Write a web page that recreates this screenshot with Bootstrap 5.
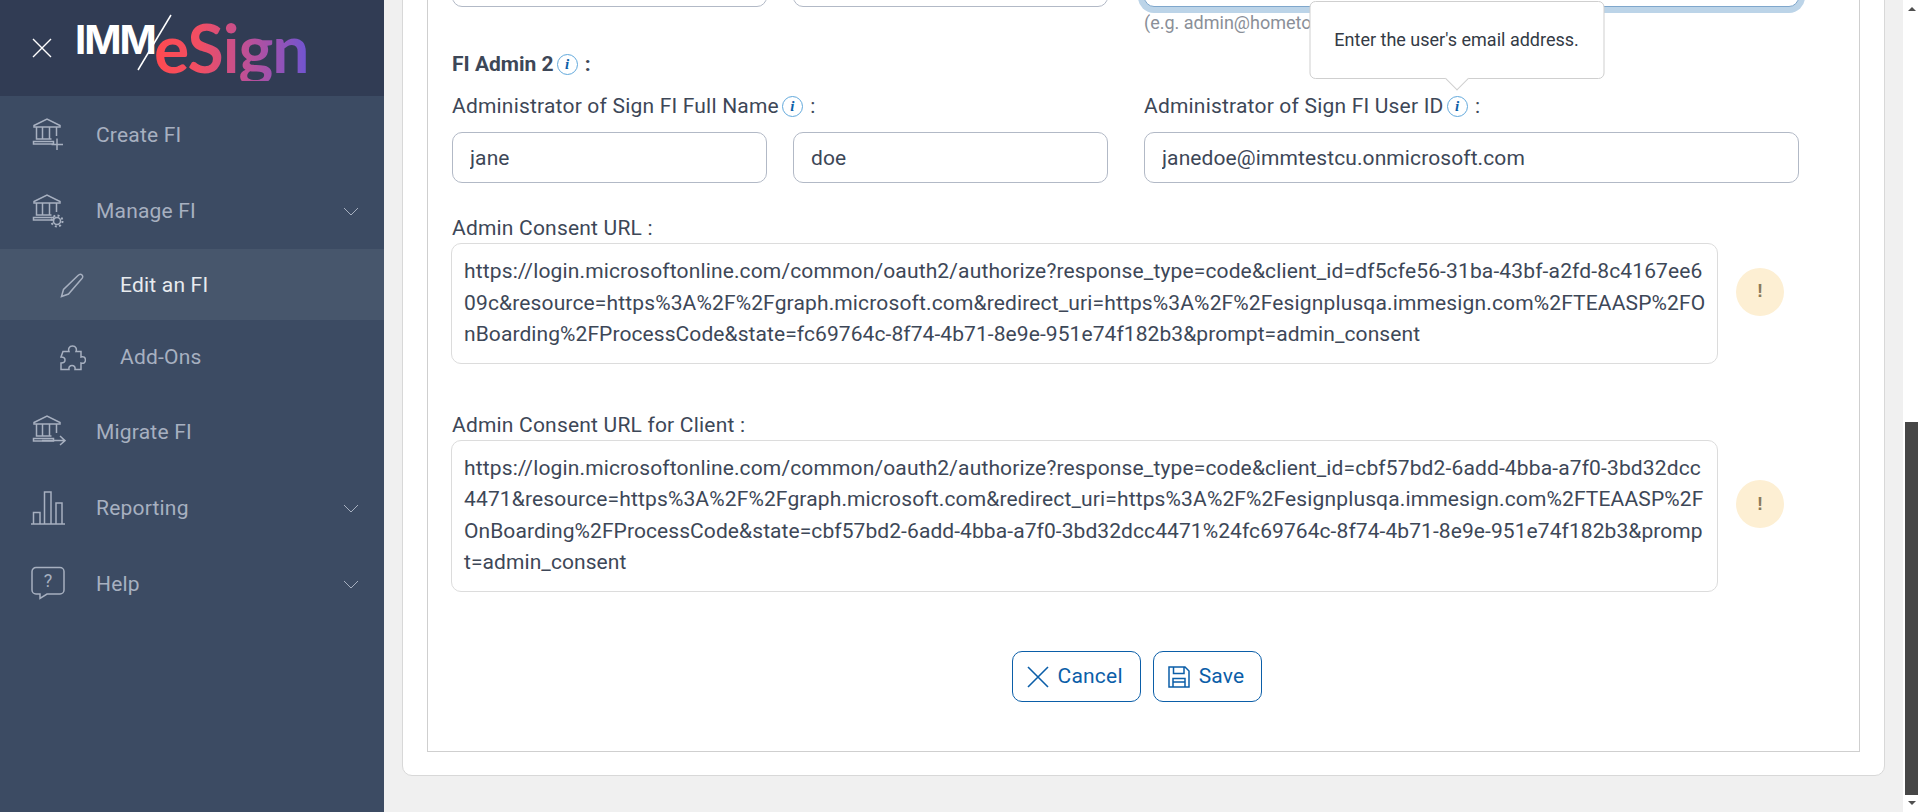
<!DOCTYPE html>
<html lang="en">
<head>
    <meta charset="UTF-8">
    <meta name="viewport" content="width=device-width, initial-scale=1.0">
    <title>Edit an FI</title>
    <link href="https://cdn.jsdelivr.net/npm/bootstrap@5.3.0/dist/css/bootstrap.min.css" rel="stylesheet">
    <style>
        html, body { height: 100%; overflow: hidden; }
        body {
            background: #f0f0f0;
            color: #3d4757;
            font-family: Roboto, "Liberation Sans", sans-serif;
            font-size: 21px;
            letter-spacing: .2px;
        }
        .app-shell { height: 812px; }

        /* sidebar */
        .side-nav { width: 384px; background: #3c4b63; flex: none; }
        .side-head { height: 96px; background: #313c54; padding-left: 32px; }
        .close-x { width: 20px; height: 20px; margin-right: 25px; }
        .logo-box { position: relative; width: 236px; height: 72px; }
        .logo-imm {
            font-family: Inter, sans-serif; font-weight: 700; font-size: 40px; line-height: 1;
            color: #fff; letter-spacing: -2px; position: absolute; left: -2px; top: 8px;
        }
        .logo-sign {
            font-family: Lato, sans-serif; font-weight: 700; font-size: 66px; line-height: 1;
            letter-spacing: -1px; position: absolute; left: 77px; top: 3px;
            background: linear-gradient(90deg, #ff4a4f 0%, #ef4e64 30%, #b9509a 62%, #6e55d2 100%);
            -webkit-background-clip: text; background-clip: text; color: transparent;
        }
        .logo-slash { position: absolute; left: 60px; top: 2px; }
        .menu-list { padding-top: 1px; }
        .menu-row { color: #a7b0c0; padding-left: 30px; padding-right: 25px; height: 76px; }
        .menu-row svg { flex: none; }
        .menu-icon { width: 66px; flex: none; }
        .menu-label { padding-top: 2px; }
        .menu-row .chev { margin-left: auto; }
        .sub-row { height: 74px; padding-left: 60px; }
        .sub-row .menu-icon { width: 60px; }
        .sub-row.is-active { height: 71px; background: #47566c; color: #e8ebef; }
        .nav-svg { fill: none; stroke: #a7b0c0; stroke-width: 1.5; }

        /* content */
        .work-area { flex: 1; min-width: 0; padding: 0 18px 0 18px; overflow: hidden; }
        .sheet { margin-top: -94px; background: #fff; border: 1px solid #d8d8d8; border-radius: 10px; padding: 24px; height: 870px; }
        .sheet-inner { border: 1px solid #cfcfcf; height: 821px; padding: 0 24px; }
        .two-col { gap: 36px; }
        .name-col { width: 656px; }
        .user-col { width: 655px; }
        .field-gap { gap: 26px; }
        .form-control.plain-input {
            height: 51px; font-size: 21px; color: #3d4757; border: 1px solid #b2b9c6; border-radius: 10px;
            padding: 0 17px; background: #fff; letter-spacing: .1px;
        }
        .form-control.focus-input { border-color: #7fa7cc; box-shadow: 0 0 0 6px #bcd4e8; }
        .first-row { padding-top: 24px; }
        .eg-text { font-size: 18px; color: #8a8f98; line-height: 20px; margin-top: 6px; height: 20px; white-space: nowrap; letter-spacing: 0; }
        .admin-title { font-weight: 700; margin-top: 19px; line-height: 24px; letter-spacing: 0; }
        .info-dot {
            display: inline-flex; align-items: center; justify-content: center; width: 21px; height: 21px;
            border: 1px solid #62a9dc; border-radius: 50%; color: #0b5ea8; vertical-align: 2px; margin: 0 2px 0 3px;
            font: italic 700 15px/1 "Liberation Serif", serif;
        }
        .field-label { line-height: 24px; margin-bottom: 14px; margin-top: 18px; }
        .tip-anchor { position: relative; display: inline-block; }
        .tip-box {
            position: absolute; left: 50%; bottom: 39px; transform: translateX(-50%); width: 295px; height: 78px;
            background: #fff; border: 1px solid #cfcfcf; border-radius: 6px; z-index: 5;
            font-size: 18px; line-height: 1; display: flex; align-items: center; justify-content: center; white-space: nowrap;
            color: #333a45; letter-spacing: 0;
        }
        .tip-box::after {
            content: ""; position: absolute; left: 50%; bottom: -9px; width: 17px; height: 17px; margin-left: -8px;
            background: #fff; border-right: 1px solid #cfcfcf; border-bottom: 1px solid #cfcfcf; transform: rotate(45deg);
        }
        .url-label { line-height: 24px; margin-top: 33px; margin-bottom: 3px; }
        .url-label.second { margin-top: 49px; }
        .url-wrap { gap: 18px; margin-left: -1px; }
        .url-box {
            width: 1267px; border: 1px solid #dcdcdc; border-radius: 10px; padding: 12px 11px 12px 12px; line-height: 31.5px;
            word-break: break-all; background: #fff; flex: none; letter-spacing: .14px;
        }
        .tight-run { letter-spacing: .08px; }
        .warn-dot {
            width: 48px; height: 48px; border-radius: 50%; background: #fdefd3; color: #8a7a5a; flex: none;
            font: 700 18px "Liberation Sans", sans-serif; margin-bottom: 23px;
        }
        .foot-btns { gap: 12px; margin-top: 59px; padding-right: 13px; }
        .btn.blue-btn {
            height: 51px; font-size: 21px; color: #0b5ea8; border: 1px solid #0b5ea8; border-radius: 10px; background: #fff;
            padding: 2px 17px 0 14px; gap: 9px; letter-spacing: .2px;
        }

        /* scrollbar */
        .fake-scroll { width: 17px; flex: none; background: #fff; position: relative; }
        .arrow-up { width: 0; height: 0; border: 4px solid transparent; border-top: 0; border-bottom-color: #505050; margin: 7px 0 0 5px; }
        .arrow-down { width: 0; height: 0; border: 4px solid transparent; border-bottom: 0; border-top-color: #505050; margin: 6px 0 0 5px; }
        .thumb { width: 13px; height: 373px; margin: 411px 0 0 2px; background: #464646; }
    </style>
</head>
<body>
    <svg width="0" height="0" class="d-none">
        <symbol id="bank" viewBox="0 0 36 36">
            <path d="M4 8.5 17 2l13 6.5v1.5H4zM6.500 10v12h15M12.500 10v12M19.500 10v12M26.500 10v9M3.500 24.500h20v2.500h-20z"/>
        </symbol>
    </svg>
    <div class="app-shell d-flex">
        <nav class="side-nav d-flex flex-column">
            <div class="side-head d-flex align-items-center">
                <svg class="close-x" viewBox="0 0 20 20" fill="none" stroke="#fff" stroke-width="1.4"><path d="M1 1l18 18M19 1 1 19"/></svg>
                <div class="logo-box">
                    <span class="logo-imm">IMM</span>
                    <span class="logo-sign">eSign</span>
                    <svg class="logo-slash" width="36" height="60" fill="none" stroke="#fff" stroke-width="1.5"><path d="M34 1 1 56"/></svg>
                </div>
            </div>
            <div class="menu-list d-flex flex-column">
                <a class="menu-row d-flex align-items-center text-decoration-none">
                    <span class="menu-icon"><svg class="nav-svg" width="36" height="36"><use href="#bank"/><path d="M27 21.500V33M21.500 27.500H33"/></svg></span>
                    <span class="menu-label">Create FI</span>
                </a>
                <a class="menu-row d-flex align-items-center text-decoration-none">
                    <span class="menu-icon"><svg class="nav-svg" width="36" height="36"><use href="#bank"/><circle cx="27" cy="28" r="3.500"/><circle cx="27" cy="28" r="5.500" stroke-width="2" stroke-dasharray="2 2.300"/></svg></span>
                    <span class="menu-label">Manage FI</span>
                    <svg class="chev" width="16" height="9" fill="none" stroke="#a7b0c0"><path d="M1 1l7 7 7-7"/></svg>
                </a>
                <a class="menu-row sub-row is-active d-flex align-items-center text-decoration-none">
                    <span class="menu-icon"><svg class="nav-svg" width="25" height="25"><path d="M1.500 23.500 3.500 16.500 18 2.500c1.500-1.500 3-1.500 4 -.5s1 2.500-.5 4L8.500 21z"/></svg></span>
                    <span class="menu-label">Edit an FI</span>
                </a>
                <a class="menu-row sub-row d-flex align-items-center text-decoration-none">
                    <span class="menu-icon"><svg class="nav-svg" width="26" height="26"><path d="M3 6.500H9C8 4 9 1 12.500 1S17 4 16 6.500H21V12C23.500 11 25.500 12.500 25.500 15S23.500 19 21 18V24.500H15C15.500 22 14 20.500 12 20.500S8.500 22 9 24.500H1V18C3.500 18 5 17 5 15S3.500 12 1 12z"/></svg></span>
                    <span class="menu-label">Add-Ons</span>
                </a>
                <a class="menu-row d-flex align-items-center text-decoration-none">
                    <span class="menu-icon"><svg class="nav-svg" width="36" height="36"><use href="#bank"/><path d="M12 26.600H35M30 22l5 4.600-5 4.400"/></svg></span>
                    <span class="menu-label">Migrate FI</span>
                </a>
                <a class="menu-row d-flex align-items-center text-decoration-none">
                    <span class="menu-icon"><svg class="nav-svg" width="36" height="36"><path d="M1 34H35M3.500 34V22.500H10V34M14.500 34V2H21V34M26 34V13H32V34"/></svg></span>
                    <span class="menu-label">Reporting</span>
                    <svg class="chev" width="16" height="9" fill="none" stroke="#a7b0c0"><path d="M1 1l7 7 7-7"/></svg>
                </a>
                <a class="menu-row d-flex align-items-center text-decoration-none">
                    <span class="menu-icon"><svg class="nav-svg" width="36" height="36"><path d="M6 1.500H30a4 4 0 0 1 4 4V24a4 4 0 0 1-4 4H17L10 32.500V28H6a4 4 0 0 1-4-4V5.500a4 4 0 0 1 4-4z"/><text x="18" y="21" text-anchor="middle" font-size="18" font-family="Roboto" fill="#a7b0c0" stroke="none">?</text></svg></span>
                    <span class="menu-label">Help</span>
                    <svg class="chev" width="16" height="9" fill="none" stroke="#a7b0c0"><path d="M1 1l7 7 7-7"/></svg>
                </a>
            </div>
        </nav>

        <main class="work-area">
            <div class="sheet">
                <div class="sheet-inner">
                    <div class="d-flex two-col first-row">
                        <div class="name-col d-flex field-gap">
                            <input class="form-control plain-input" type="text">
                            <input class="form-control plain-input" type="text">
                        </div>
                        <div class="user-col">
                            <input class="form-control plain-input focus-input" type="text">
                            <div class="eg-text">(e.g. admin@hometo</div>
                        </div>
                    </div>

                    <div class="admin-title">FI Admin 2<span class="info-dot">i</span> :</div>
                    <div class="d-flex two-col">
                        <div class="name-col">
                            <div class="field-label">Administrator of Sign FI Full Name<span class="info-dot">i</span> :</div>
                            <div class="d-flex field-gap">
                                <input class="form-control plain-input" type="text" value="jane">
                                <input class="form-control plain-input" type="text" value="doe">
                            </div>
                        </div>
                        <div class="user-col">
                            <div class="field-label">Administrator of Sign FI User ID<span class="tip-anchor"><span class="info-dot">i</span><span class="tip-box">Enter the user's email address.</span></span> :</div>
                            <input class="form-control plain-input" type="text" value="janedoe@immtestcu.onmicrosoft.com">
                        </div>
                    </div>

                    <div class="url-label">Admin Consent URL :</div>
                    <div class="d-flex align-items-center url-wrap">
                        <div class="url-box">https://login.microsoftonline.com/common/oauth2/authorize?response_type=code&amp;client_id=df5cfe56-31ba-43bf-a2fd-8c4167ee609c&amp;resource=https%3A%2F%2Fgraph.microsoft.com&amp;redirect_uri=https%3A%2F%2Fesignplusqa.immesign.com%2FTEAASP%2FO<span class="tight-run">nBoarding%2FProcessCode&amp;state=fc69764c-8f74-4b71-8e9e-951e74f182b3&amp;prompt=admin_consent</span></div>
                        <div class="warn-dot d-flex align-items-center justify-content-center">!</div>
                    </div>

                    <div class="url-label second">Admin Consent URL for Client :</div>
                    <div class="d-flex align-items-center url-wrap">
                        <div class="url-box">https://login.microsoftonline.com/common/oauth2/authorize?response_type=code&amp;client_id=cbf57bd2-6add-4bba-a7f0-3bd32dcc4471&amp;resource=https%3A%2F%2Fgraph.microsoft.com&amp;redirect_uri=https%3A%2F%2Fesignplusqa.immesign.com%2FTEAASP%2F<span class="tight-run">OnBoarding%2FProcessCode&amp;state=cbf57bd2-6add-4bba-a7f0-3bd32dcc4471%24fc69764c-8f74-4b71-8e9e-951e74f182b3&amp;prompt=admin_consent</span></div>
                        <div class="warn-dot d-flex align-items-center justify-content-center">!</div>
                    </div>

                    <div class="d-flex justify-content-center foot-btns">
                        <button class="btn blue-btn d-flex align-items-center" type="button">
                            <svg width="22" height="22" fill="none" stroke="#0b5ea8" stroke-width="1.6"><path d="M1 1l20 20M21 1 1 21"/></svg>Cancel
                        </button>
                        <button class="btn blue-btn d-flex align-items-center" type="button">
                            <svg width="22" height="22" fill="none" stroke="#0b5ea8" stroke-width="1.5"><path d="M1 1H17L21 5V21H1zM5.500 1V7.500H16V1M5 21V12.500H17V21M5 16H17"/></svg>Save
                        </button>
                    </div>
                </div>
            </div>
        </main>

        <div class="fake-scroll">
            <div class="arrow-up"></div>
            <div class="thumb"></div>
            <div class="arrow-down"></div>
        </div>
    </div>
    <script src="https://cdn.jsdelivr.net/npm/bootstrap@5.3.0/dist/js/bootstrap.bundle.min.js"></script>
</body>
</html>
